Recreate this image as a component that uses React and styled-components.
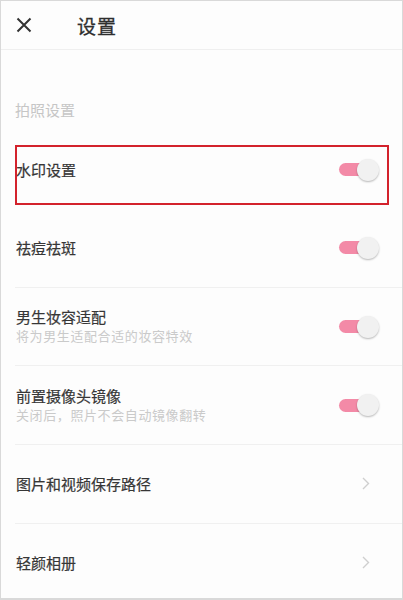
import React from "react";
import styled, { createGlobalStyle } from "styled-components";

const GlobalStyle = createGlobalStyle`
  html, body {
    margin: 0;
    padding: 0;
    background: #fff;
  }
  * {
    box-sizing: border-box;
  }
`;

const items = [
  { title: "水印设置", type: "switch", highlight: true },
  { title: "祛痘祛斑", type: "switch" },
  { title: "男生妆容适配", desc: "将为男生适配合适的妆容特效", type: "switch" },
  { title: "前置摄像头镜像", desc: "关闭后，照片不会自动镜像翻转", type: "switch" },
  { title: "图片和视频保存路径", type: "link" },
  { title: "轻颜相册", type: "link" },
];

const App = () => {
  return (
    <>
      <GlobalStyle />
      <Screen>
        <Header>
          <CloseButton>
            <svg width="16" height="16" viewBox="0 0 16 16">
              <path d="M1.5 1.5 L14.5 14.5 M14.5 1.5 L1.5 14.5" stroke="#333" strokeWidth="2" fill="none" />
            </svg>
          </CloseButton>
          <Title>设置</Title>
        </Header>
        <SectionTitle>拍照设置</SectionTitle>
        {items.map((item, i) => (
          <Row key={item.title} $divider={i > 1} $tall={i === 0}>
            {item.highlight && <Highlight />}
            <Texts>
              <Label>{item.title}</Label>
              {item.desc && <Desc>{item.desc}</Desc>}
            </Texts>
            {item.type === "switch" ? (
              <Switch>
                <Track />
                <Knob />
              </Switch>
            ) : (
              <Chevron>
                <svg width="8" height="13" viewBox="0 0 8 13">
                  <path d="M1 1 L6.5 6.5 L1 12" stroke="#cfcfcf" strokeWidth="1.4" fill="none" />
                </svg>
              </Chevron>
            )}
          </Row>
        ))}
      </Screen>
    </>
  );
};

const Screen = styled.div`
  width: 403px;
  height: 600px;
  border: 1px solid #d9d9d9;
  border-bottom-width: 2px;
  background: #fdfdfd;
  overflow: hidden;
  font-family: "Noto Sans CJK SC", "Noto Sans", sans-serif;
`;

const Header = styled.div`
  display: flex;
  align-items: center;
  height: 49px;
  padding-left: 15px;
  border-bottom: 1px solid #efefef;
`;

const CloseButton = styled.div`
  display: flex;
  width: 16px;
  height: 16px;
  margin-right: 45px;
`;

const Title = styled.span`
  font-size: 19px;
  color: #2e2e2e;
  letter-spacing: 1px;
  -webkit-text-stroke: 0.3px #2e2e2e;
`;

const SectionTitle = styled.div`
  display: flex;
  align-items: flex-end;
  height: 80px;
  padding: 0 0 10px 14px;
  font-size: 15px;
  line-height: 20px;
  color: #c6c6c6;
`;

const Row = styled.div`
  position: relative;
  display: flex;
  align-items: center;
  justify-content: space-between;
  height: ${(p) => (p.$tall ? "78px" : "78.7px")};
  margin-left: 14px;
  padding: 0 23px 0 1px;
  border-top: ${(p) => (p.$divider ? "1px solid #f0f0f0" : "1px solid transparent")};
`;

const Highlight = styled.div`
  position: absolute;
  left: 0;
  top: 14px;
  width: 374px;
  height: 60px;
  border: 2px solid #d3222c;
  pointer-events: none;
`;

const Texts = styled.div`
  display: flex;
  flex-direction: column;
  gap: 1px;
`;

const Label = styled.span`
  font-size: 15px;
  line-height: 18px;
  color: #363636;
  -webkit-text-stroke: 0.2px #363636;
`;

const Desc = styled.span`
  font-size: 13px;
  line-height: 18px;
  color: #cacaca;
  letter-spacing: 0.6px;
`;

const Switch = styled.div`
  position: relative;
  display: flex;
  align-items: center;
  width: 40px;
  height: 22px;
`;

const Track = styled.div`
  width: 34px;
  height: 13px;
  border-radius: 7px;
  background: #f38aa7;
`;

const Knob = styled.div`
  position: absolute;
  right: 0;
  top: 0;
  width: 22px;
  height: 22px;
  border-radius: 50%;
  background: #f1f1f1;
  box-shadow: 0 1px 2px rgba(0, 0, 0, 0.28);
`;

const Chevron = styled.div`
  display: flex;
  margin-right: 9px;
`;

export default App;
